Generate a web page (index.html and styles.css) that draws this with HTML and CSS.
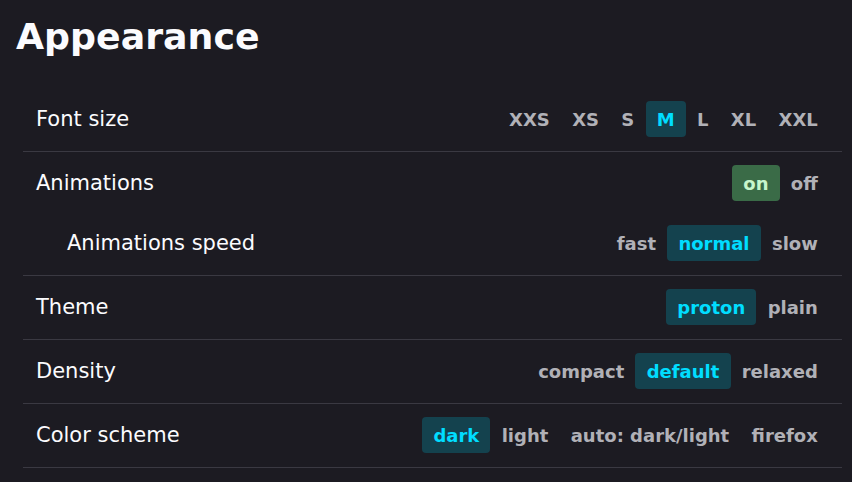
FILE: index.html
```html
<!DOCTYPE html>
<html lang="en">
<head>
<meta charset="utf-8">
<title>Appearance</title>
<link rel="stylesheet" href="styles.css">
</head>
<body>
<main class="page">
  <h1 class="title">Appearance</h1>
  <div class="settings">
    <section class="group">
      <div class="row">
        <span class="label">Font size</span>
        <div class="options">
          <span class="opt">XXS</span><span class="opt">XS</span><span class="opt">S</span><span class="opt sel">M</span><span class="opt">L</span><span class="opt">XL</span><span class="opt">XXL</span>
        </div>
      </div>
    </section>
    <section class="group">
      <div class="row">
        <span class="label">Animations</span>
        <div class="options">
          <span class="opt on">on</span><span class="opt">off</span>
        </div>
      </div>
      <div class="row sub">
        <span class="label">Animations speed</span>
        <div class="options">
          <span class="opt">fast</span><span class="opt sel">normal</span><span class="opt">slow</span>
        </div>
      </div>
    </section>
    <section class="group">
      <div class="row">
        <span class="label">Theme</span>
        <div class="options">
          <span class="opt sel">proton</span><span class="opt">plain</span>
        </div>
      </div>
    </section>
    <section class="group">
      <div class="row">
        <span class="label">Density</span>
        <div class="options">
          <span class="opt">compact</span><span class="opt sel">default</span><span class="opt">relaxed</span>
        </div>
      </div>
    </section>
    <section class="group">
      <div class="row">
        <span class="label">Color scheme</span>
        <div class="options">
          <span class="opt sel">dark</span><span class="opt">light</span><span class="opt">auto: dark/light</span><span class="opt">firefox</span>
        </div>
      </div>
    </section>
  </div>
</main>
</body>
</html>
```
FILE: styles.css
```css
html, body {
  margin: 0;
  background: #1c1b22;
  color: #fbfbfe;
  font-family: "DejaVu Sans", sans-serif;
}
.page {
  padding: 16px 10px 0 16px;
}
.title {
  margin: 0 0 30px 0;
  font-size: 36.3px;
  font-weight: bold;
  line-height: 42px;
  color: #fbfbfe;
}
.settings {
  margin-left: 7px;
}
.group {
  display: flex;
  flex-direction: column;
  gap: 24px;
  padding: 13px 13px 14px;
  border-bottom: 1px solid #3a3942;
}
.row {
  display: flex;
  align-items: center;
  justify-content: space-between;
  height: 36px;
}
.label {
  font-size: 21px;
}
.sub .label {
  padding-left: 31px;
}
.options {
  display: flex;
  align-items: center;
}
.opt {
  display: flex;
  align-items: center;
  height: 36px;
  padding: 0 11.2px;
  border-radius: 4px;
  font-size: 18px;
  font-weight: bold;
  color: #b1b1b7;
}
.opt.sel {
  background: #14424e;
  color: #00ddff;
}
.opt.on {
  background: #3a6b47;
  color: #c6f6cc;
}
```
